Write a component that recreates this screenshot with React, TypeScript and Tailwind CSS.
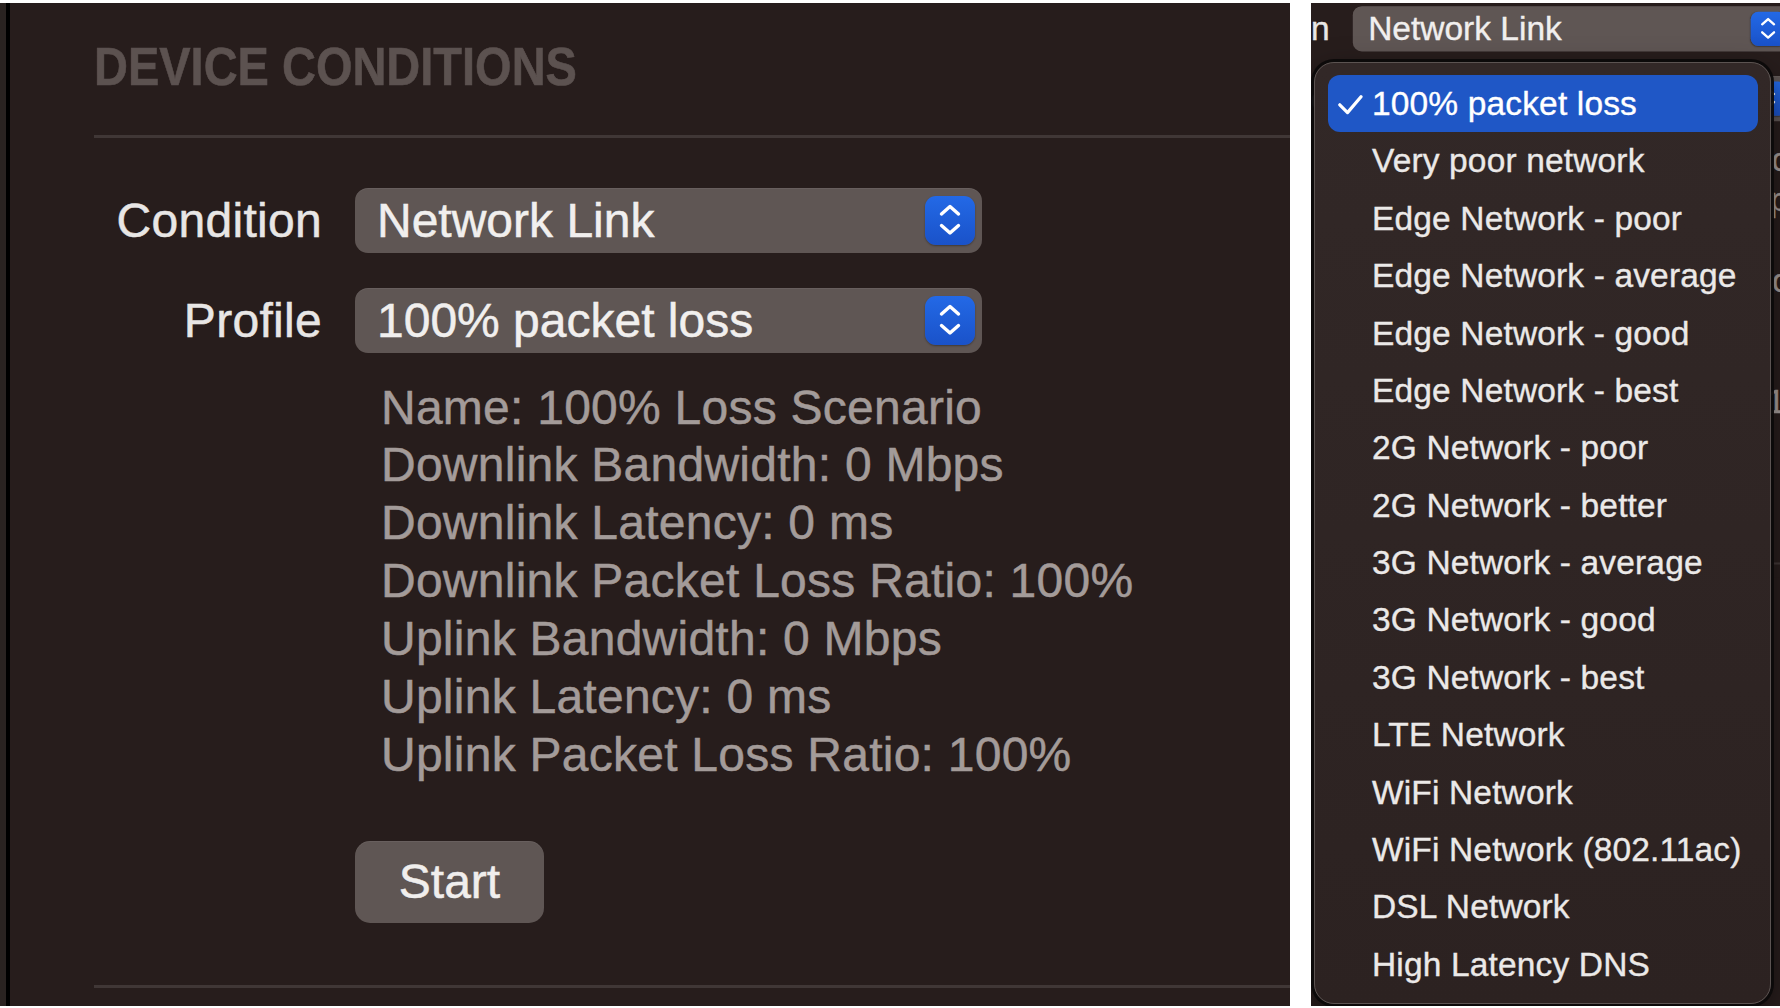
import React from "react";

const items = [
  "100% packet loss",
  "Very poor network",
  "Edge Network - poor",
  "Edge Network - average",
  "Edge Network - good",
  "Edge Network - best",
  "2G Network - poor",
  "2G Network - better",
  "3G Network - average",
  "3G Network - good",
  "3G Network - best",
  "LTE Network",
  "WiFi Network",
  "WiFi Network (802.11ac)",
  "DSL Network",
  "High Latency DNS",
];

const info = [
  "Name: 100% Loss Scenario",
  "Downlink Bandwidth: 0 Mbps",
  "Downlink Latency: 0 ms",
  "Downlink Packet Loss Ratio: 100%",
  "Uplink Bandwidth: 0 Mbps",
  "Uplink Latency: 0 ms",
  "Uplink Packet Loss Ratio: 100%",
];

function Chevrons() {
  return (
    <svg width="50" height="49" viewBox="0 0 50 49" fill="none">
      <path d="M16.5 18 L25 10.5 L33.5 18" stroke="white" strokeWidth="3.4" strokeLinecap="round" strokeLinejoin="round" />
      <path d="M16.5 29.5 L25 37 L33.5 29.5" stroke="white" strokeWidth="3.4" strokeLinecap="round" strokeLinejoin="round" />
    </svg>
  );
}

function Row({ label, value, top }: { label: string; value: string; top: string }) {
  return (
    <div className={`flex items-center h-[65px] ${top}`}>
      <div className="w-[228px] text-right text-[48px] leading-none tracking-[0.3px] text-[#e8e6e5] whitespace-nowrap [-webkit-text-stroke:0.5px_currentcolor]">
        {label}
      </div>
      <div className="ml-[33px] w-[627px] h-[65px] rounded-[13px] bg-[#5f5654] flex items-center justify-between pl-[22px] pr-[7px] shadow-[inset_0_1px_0_rgba(255,255,255,0.06)]">
        <span className="text-[48px] leading-none text-[#f1efee] whitespace-nowrap [-webkit-text-stroke:0.5px_currentcolor]">{value}</span>
        <div className="w-[50px] h-[49px] rounded-[11px] bg-linear-to-b from-[#2369e6] to-[#1a52c9] flex items-center justify-center shadow-[0_1px_2px_rgba(0,0,0,0.35)]">
          <Chevrons />
        </div>
      </div>
    </div>
  );
}

function Panel() {
  return (
    <div className="w-[1290px] h-[1003px] bg-[#271d1c] flex shrink-0 font-[family-name:Liberation_Sans,Arial,sans-serif]">
      <div className="w-[6px] bg-[#2a2321]" />
      <div className="w-[4px] bg-black" />
      <div className="flex-1 flex flex-col pl-[84px]">
        <div className="mt-[36px] h-[54px] text-[54px] leading-none font-bold text-[#5c5250] origin-left [transform:scaleX(0.87)] whitespace-nowrap [-webkit-text-stroke:0.6px_currentcolor]">
          DEVICE CONDITIONS
        </div>
        <div className="mt-[42px] h-[3px] bg-[#403736]" />
        <Row label="Condition" value="Network Link" top="mt-[50px]" />
        <Row label="Profile" value="100% packet loss" top="mt-[35px]" />
        <div className="mt-[25.5px] ml-[287px] flex flex-col">
          {info.map((t) => (
            <div
              key={t}
              className="h-[57.9px] leading-[57.9px] text-[48px] tracking-[0.25px] text-[#a39b99] whitespace-nowrap [-webkit-text-stroke:0.5px_currentcolor]"
            >
              {t}
            </div>
          ))}
        </div>
        <div className="mt-[57px] ml-[261px] w-[189px] h-[82px] rounded-[15px] bg-[#5f5654] flex items-center justify-center text-[48px] leading-none text-[#f0eeed] shadow-[inset_0_1px_0_rgba(255,255,255,0.06)] [-webkit-text-stroke:0.5px_currentcolor]">
          Start
        </div>
        <div className="mt-[62px] h-[3px] bg-[#403736]" />
      </div>
    </div>
  );
}

function Check() {
  return (
    <svg width="25" height="20" viewBox="0 0 25 20" fill="none" className="ml-[10px] mt-[3px]">
      <path d="M1.8 9.8 L9.5 17.6 L23 1.8" stroke="white" strokeWidth="3.2" strokeLinecap="round" strokeLinejoin="round" />
    </svg>
  );
}

function Menu() {
  return (
    <div className="absolute left-[3px] top-[59px] w-[457px] h-[942px] rounded-[20px] bg-linear-to-b from-[#322827] to-[#2c2221] border border-[#5b5351] shadow-[0_0_0_3px_rgba(12,9,9,0.95),0_10px_30px_rgba(0,0,0,0.5)] pt-[12px] pl-[13px] pr-[12px] flex flex-col font-[family-name:Liberation_Sans,Arial,sans-serif]">
      {items.map((t, i) => (
        <div
          key={t}
          className={
            i === 0
              ? "h-[57.4px] shrink-0 flex items-center rounded-[12px] bg-[#1f57c6] text-white text-[33.5px] leading-none"
              : "h-[57.4px] shrink-0 flex items-center rounded-[12px] text-[#ebe9e8] text-[33.5px] leading-none"
          }
        >
          <div className="w-[44px] shrink-0 flex items-center">{i === 0 ? <Check /> : null}</div>
          <span className="whitespace-nowrap tracking-[0.15px] [-webkit-text-stroke:0.35px_currentcolor]">{t}</span>
        </div>
      ))}
    </div>
  );
}

export default function App() {
  return (
    <div className="w-[1780px] h-[1008px] bg-white flex items-start pt-[3px] gap-[21px] overflow-hidden">
      <Panel />
      <div className="relative w-[469px] h-[1003px] bg-[#271d1c] overflow-hidden shrink-0">
        <div className="ml-[-205.8px] mt-[-126.1px] w-[1290px] h-[1003px] origin-top-left [transform:scale(0.698)]">
          <Panel />
        </div>
        <Menu />
      </div>
    </div>
  );
}
